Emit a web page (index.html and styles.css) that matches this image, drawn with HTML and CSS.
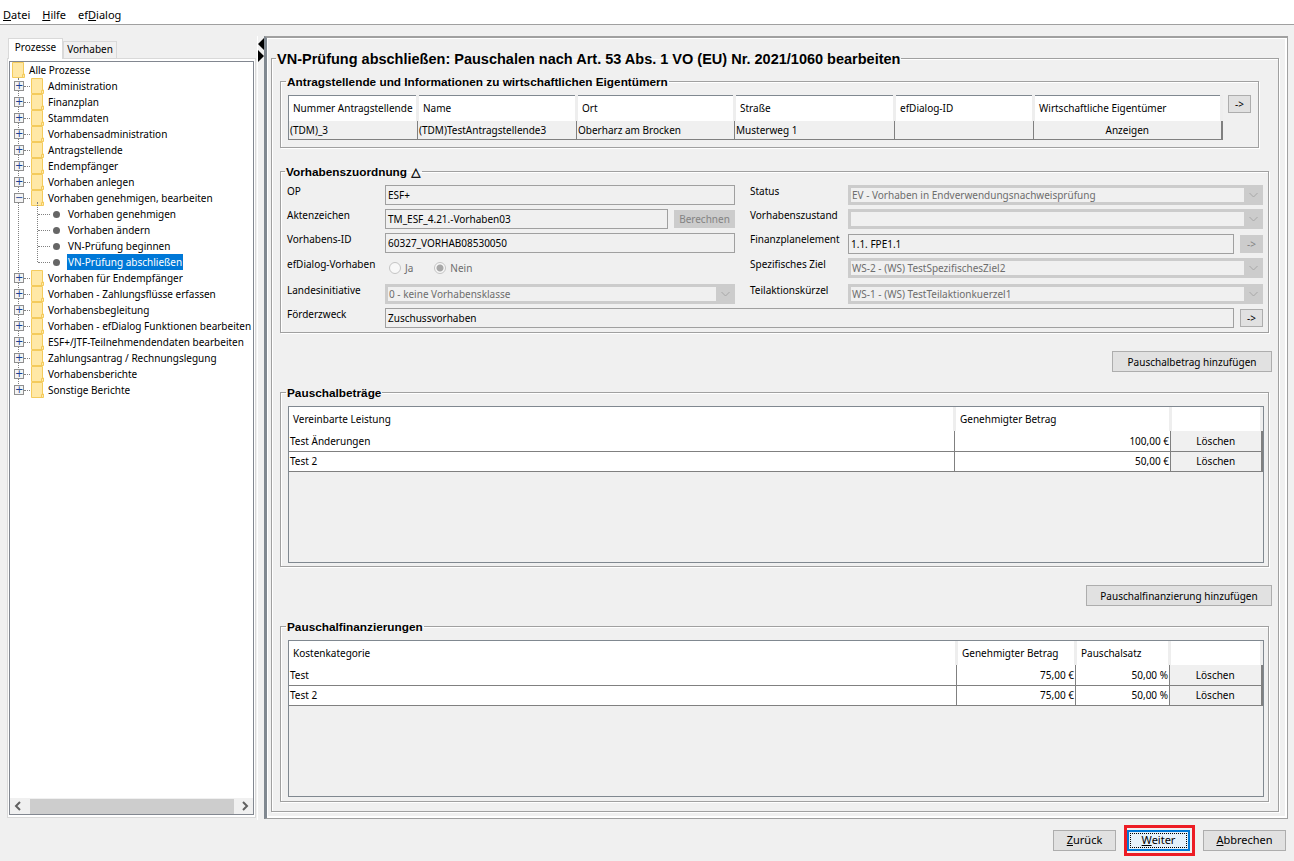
FILE: index.html
```html
<!DOCTYPE html>
<html lang="de">
<head>
    <meta charset="UTF-8">
    <title>efDialog</title>
    <link rel="stylesheet" href="styles.css">
</head>
<body>
    <svg class="defs" width="0" height="0">
        <symbol id="folder" viewBox="0 0 13 16">
            <path d="M.5.5h11v11.500h1v3.500H.5z" fill="#ffe8a6" stroke="#f4cb5c"/>
            <path d="M10.500 15.500v-3h2" fill="none" stroke="#f4cb5c"/>
        </symbol>
    </svg>

    <nav class="menubar">
        <span><u>D</u>atei</span>
        <span><u>H</u>ilfe</span>
        <span>ef<u>D</u>ialog</span>
    </nav>

    <main class="workspace">
        <aside class="side">
            <div class="tabs">
                <div class="tab active">Prozesse</div>
                <div class="tab">Vorhaben</div>
            </div>
            <div class="tab-panel">
                <div class="tree">
                    <div class="tree-scroll">
                        <div class="node root"><svg class="folder"><use href="#folder"/></svg>Alle Prozesse</div>
                        <ul class="level1">
                            <li class="node"><span class="exp">+</span><svg class="folder"><use href="#folder"/></svg>Administration</li>
                            <li class="node"><span class="exp">+</span><svg class="folder"><use href="#folder"/></svg>Finanzplan</li>
                            <li class="node"><span class="exp">+</span><svg class="folder"><use href="#folder"/></svg>Stammdaten</li>
                            <li class="node"><span class="exp">+</span><svg class="folder"><use href="#folder"/></svg>Vorhabensadministration</li>
                            <li class="node"><span class="exp">+</span><svg class="folder"><use href="#folder"/></svg>Antragstellende</li>
                            <li class="node"><span class="exp">+</span><svg class="folder"><use href="#folder"/></svg>Endempfänger</li>
                            <li class="node"><span class="exp">+</span><svg class="folder"><use href="#folder"/></svg>Vorhaben anlegen</li>
                            <li class="node"><span class="exp">−</span><svg class="folder"><use href="#folder"/></svg>Vorhaben genehmigen, bearbeiten</li>
                            <li>
                                <ul class="level2">
                                    <li class="leaf"><i class="dot"></i>Vorhaben genehmigen</li>
                                    <li class="leaf"><i class="dot"></i>Vorhaben ändern</li>
                                    <li class="leaf"><i class="dot"></i>VN-Prüfung beginnen</li>
                                    <li class="leaf"><i class="dot"></i><span class="selected">VN-Prüfung abschließen</span></li>
                                </ul>
                            </li>
                            <li class="node"><span class="exp">+</span><svg class="folder"><use href="#folder"/></svg>Vorhaben für Endempfänger</li>
                            <li class="node"><span class="exp">+</span><svg class="folder"><use href="#folder"/></svg>Vorhaben - Zahlungsflüsse erfassen</li>
                            <li class="node"><span class="exp">+</span><svg class="folder"><use href="#folder"/></svg>Vorhabensbegleitung</li>
                            <li class="node"><span class="exp">+</span><svg class="folder"><use href="#folder"/></svg>Vorhaben - efDialog Funktionen bearbeiten</li>
                            <li class="node"><span class="exp">+</span><svg class="folder"><use href="#folder"/></svg>ESF+/JTF-Teilnehmendendaten bearbeiten</li>
                            <li class="node"><span class="exp">+</span><svg class="folder"><use href="#folder"/></svg>Zahlungsantrag / Rechnungslegung</li>
                            <li class="node"><span class="exp">+</span><svg class="folder"><use href="#folder"/></svg>Vorhabensberichte</li>
                            <li class="node"><span class="exp">+</span><svg class="folder"><use href="#folder"/></svg>Sonstige Berichte</li>
                        </ul>
                    </div>
                    <div class="hscroll">
                        <svg width="10" height="10" viewBox="0 0 10 10"><path d="M7 1 3 5l4 4" fill="none" stroke="#606060" stroke-width="2"/></svg>
                        <div class="thumb"></div>
                        <svg width="10" height="10" viewBox="0 0 10 10"><path d="m3 1 4 4-4 4" fill="none" stroke="#606060" stroke-width="2"/></svg>
                    </div>
                </div>
            </div>
        </aside>

        <div class="splitter">
            <svg width="6" height="24" viewBox="0 0 6 24"><path d="M6 0v12L0 6zM0 12l6 6-6 6z" fill="#000"/></svg>
        </div>

        <section class="content">
            <fieldset class="frame page-frame">
                <legend class="page-title">VN-Prüfung abschließen: Pauschalen nach Art. 53 Abs. 1 VO (EU) Nr. 2021/1060 bearbeiten</legend>

                <fieldset class="frame applicant-frame">
                    <legend>Antragstellende und Informationen zu wirtschaftlichen Eigentümern</legend>
                    <div class="applicant-row">
                        <table class="grid applicant-table">
                            <tr>
                                <th>Nummer Antragstellende</th><th>Name</th><th>Ort</th><th>Straße</th><th>efDialog-ID</th><th>Wirtschaftliche Eigentümer</th>
                            </tr>
                            <tr class="muted">
                                <td>(TDM)_3</td><td>(TDM)TestAntragstellende3</td><td>Oberharz am Brocken</td><td>Musterweg 1</td><td></td><td class="action">Anzeigen</td>
                            </tr>
                        </table>
                        <button class="btn arrow">-&gt;</button>
                    </div>
                </fieldset>

                <fieldset class="frame assign-frame">
                    <legend>Vorhabenszuordnung <span class="delta">△</span></legend>
                    <div class="form">
                        <label>OP</label>
                        <div class="input">ESF+</div>
                        <label>Status</label>
                        <div class="combo"><span>EV - Vorhaben in Endverwendungsnachweisprüfung</span><svg class="chev" viewBox="0 0 10 6"><path d="m1 1 4 4 4-4" fill="none" stroke="#a8a8a8"/></svg></div>

                        <label>Aktenzeichen</label>
                        <div class="with-btn">
                            <div class="input">TM_ESF_4.21.-Vorhaben03</div>
                            <button class="btn disabled calc">Berechnen</button>
                        </div>
                        <label>Vorhabenszustand</label>
                        <div class="combo"><span></span><svg class="chev" viewBox="0 0 10 6"><path d="m1 1 4 4 4-4" fill="none" stroke="#a8a8a8"/></svg></div>

                        <label>Vorhabens-ID</label>
                        <div class="input">60327_VORHAB08530050</div>
                        <label>Finanzplanelement</label>
                        <div class="with-btn">
                            <div class="input">1.1. FPE1.1</div>
                            <button class="btn disabled arrow">-&gt;</button>
                        </div>

                        <label>efDialog-Vorhaben</label>
                        <div class="radios">
                            <span class="radio"><i class="circle"></i>Ja</span>
                            <span class="radio"><i class="circle checked"></i>Nein</span>
                        </div>
                        <label>Spezifisches Ziel</label>
                        <div class="combo"><span>WS-2 - (WS) TestSpezifischesZiel2</span><svg class="chev" viewBox="0 0 10 6"><path d="m1 1 4 4 4-4" fill="none" stroke="#a8a8a8"/></svg></div>

                        <label>Landesinitiative</label>
                        <div class="combo"><span>0 - keine Vorhabensklasse</span><svg class="chev" viewBox="0 0 10 6"><path d="m1 1 4 4 4-4" fill="none" stroke="#a8a8a8"/></svg></div>
                        <label>Teilaktionskürzel</label>
                        <div class="combo"><span>WS-1 - (WS) TestTeilaktionkuerzel1</span><svg class="chev" viewBox="0 0 10 6"><path d="m1 1 4 4 4-4" fill="none" stroke="#a8a8a8"/></svg></div>

                        <label>Förderzweck</label>
                        <div class="with-btn wide">
                            <div class="input">Zuschussvorhaben</div>
                            <button class="btn arrow">-&gt;</button>
                        </div>
                    </div>
                </fieldset>

                <div class="add-row first"><button class="btn add">Pauschalbetrag hinzufügen</button></div>

                <fieldset class="frame list-frame flat">
                    <legend>Pauschalbeträge</legend>
                    <div class="grid-wrap">
                        <table class="grid flat-table">
                            <tr><th>Vereinbarte Leistung</th><th>Genehmigter Betrag</th><th></th></tr>
                            <tr><td>Test Änderungen</td><td class="num">100,00 €</td><td class="action">Löschen</td></tr>
                            <tr><td>Test 2</td><td class="num">50,00 €</td><td class="action">Löschen</td></tr>
                        </table>
                    </div>
                </fieldset>

                <div class="add-row second"><button class="btn add">Pauschalfinanzierung hinzufügen</button></div>

                <fieldset class="frame list-frame fin">
                    <legend>Pauschalfinanzierungen</legend>
                    <div class="grid-wrap">
                        <table class="grid fin-table">
                            <tr><th>Kostenkategorie</th><th>Genehmigter Betrag</th><th>Pauschalsatz</th><th></th></tr>
                            <tr><td>Test</td><td class="num">75,00 €</td><td class="num">50,00 %</td><td class="action">Löschen</td></tr>
                            <tr><td>Test 2</td><td class="num">75,00 €</td><td class="num">50,00 %</td><td class="action">Löschen</td></tr>
                        </table>
                    </div>
                </fieldset>
            </fieldset>
        </section>
    </main>

    <footer class="footer">
        <button class="btn nav back"><u>Z</u>urück</button>
        <div class="highlight"><button class="btn nav next"><span><u>W</u>eiter</span></button></div>
        <button class="btn nav cancel"><u>A</u>bbrechen</button>
    </footer>
</body>
</html>
```

FILE: styles.css
```css
* {
    box-sizing: border-box;
}
html, body {
    height: 100%;
}
body {
    margin: 0;
    display: flex;
    flex-direction: column;
    overflow: hidden;
    background-color: #f0f0f0;
    color: #000;
    font-family: "Noto Sans", sans-serif;
    font-size: 10px;
    line-height: 16px;
}
.defs {
    position: absolute;
}
ul {
    list-style: none;
    margin: 0;
    padding: 0;
}
button {
    font: inherit;
    color: inherit;
}

/* menu */
.menubar {
    height: 25px;
    flex: none;
    display: flex;
    align-items: center;
    gap: 12px;
    padding: 6px 0 0 3px;
    background-color: #fff;
    border-bottom: 1px solid #a0a0a0;
    font-size: 11px;
}

/* main area */
.workspace {
    height: 795px;
    flex: none;
    display: flex;
    padding: 11px 0 0 7px;
}
.side {
    width: 249px;
    flex: none;
    display: flex;
    flex-direction: column;
    padding-top: 2px;
}
.tabs {
    display: flex;
    align-items: flex-end;
    height: 21px;
    margin-bottom: -1px;
    margin-left: 1px;
    position: relative;
}
.tab {
    height: 18px;
    width: 54px;
    text-align: center;
    line-height: 15px;
    border: 1px solid #d9d9d9;
    border-bottom: none;
}
.tab.active {
    height: 21px;
    width: 55px;
    line-height: 17px;
    background-color: #fff;
}
.tab-panel {
    height: 760px;
    padding: 2px 1px;
    background-color: #fff;
    border: 1px solid #d9d9d9;
}
.tree {
    height: 100%;
    display: flex;
    flex-direction: column;
    background-color: #fff;
    border: 1px solid #828790;
}
.tree-scroll {
    flex: 1;
    overflow: hidden;
}
.node, .leaf {
    height: 16px;
    display: flex;
    align-items: center;
    white-space: nowrap;
}
.root .folder {
    margin-left: 2px;
}
.folder {
    width: 13px;
    height: 16px;
    flex: none;
    margin-right: 4px;
}
.level1 {
    position: relative;
}
.level1::before {
    content: "";
    position: absolute;
    left: 8px;
    top: 0;
    bottom: 8px;
    border-left: 1px dotted #808080;
}
.level1 > .node {
    position: relative;
    padding-left: 21px;
}
.level1 > .node::before {
    content: "";
    position: absolute;
    left: 14px;
    top: 8px;
    width: 6px;
    border-top: 1px dotted #808080;
}
.exp {
    position: absolute;
    left: 4px;
    top: 3px;
    width: 10px;
    height: 10px;
    background-color: #f4f4f4;
    border: 1px solid #8f8f8f;
    color: #1c3f94;
    font: 10px/8px "DejaVu Sans", sans-serif;
    text-align: center;
}
.level2 {
    position: relative;
    padding-left: 43px;
}
.level2::before {
    content: "";
    position: absolute;
    left: 27px;
    top: -4px;
    bottom: 8px;
    border-left: 1px dotted #808080;
}
.leaf {
    position: relative;
}
.leaf::before {
    content: "";
    position: absolute;
    left: -15px;
    top: 8px;
    width: 12px;
    border-top: 1px dotted #808080;
}
.dot {
    width: 7px;
    height: 7px;
    flex: none;
    margin-right: 8px;
    background-color: #666;
    border-radius: 50%;
}
.selected {
    margin-left: -1px;
    padding: 0 1px;
    background-color: #0078d7;
    color: #fff;
}
.hscroll {
    height: 16px;
    flex: none;
    display: flex;
    align-items: center;
    justify-content: space-between;
    padding: 0 3px;
    background-color: #f0f0f0;
}
.hscroll svg {
    flex: none;
}
.thumb {
    width: 204px;
    height: 15px;
    background-color: #cdcdcd;
}
.splitter {
    width: 7px;
    flex: none;
    padding: 2px 0 0 0;
    border-left: 1px solid #fff;
    margin-left: 1px;
}
.content {
    width: 1024px;
    height: 783px;
    flex: none;
    padding: 10px 8px 0 4px;
    border-top: 2px solid #a0a0a0;
    border-left: 3px solid #808890;
    border-right: 1px solid #a0a0a0;
    border-bottom: 1px solid #a0a0a0;
    box-shadow: inset 1px 1px 0 #fff, inset -2px -2px 0 #fff;
}

/* framed groups */
.frame {
    margin: 0;
    min-width: 0;
    border: 1px solid #a0a0a0;
    box-shadow: 1px 1px 0 #fff, inset 1px 1px 0 #fff;
}
legend {
    padding: 2px 1px 0;
    margin-left: -2px;
    font-family: "Liberation Sans", sans-serif;
    font-weight: bold;
    font-size: 11.8px;
    line-height: 14px;
}
.page-frame {
    height: 764px;
    padding: 5px 9px 0 8px;
}
.page-title {
    margin-left: -4px;
    font-size: 14.500px;
    line-height: 18px;
}
.applicant-frame {
    width: 979px;
    height: 75px;
    padding: 6px 0 0 7px;
}
.applicant-row {
    display: flex;
    align-items: flex-start;
    gap: 5px;
}
.assign-frame {
    height: 170px;
    margin-top: 15px;
    padding: 6px 5px 0 6px;
}
.delta {
    margin-left: 1px;
    font-family: "DejaVu Sans", sans-serif;
    font-size: 12px;
    -webkit-text-stroke: .4px #000;
}
.form {
    display: grid;
    grid-template-columns: 98px 350px 113px 415px;
    grid-template-rows: 20px 20px 21px 22px 20px 20px;
    row-gap: 4px;
}
.form label {
    line-height: 12px;
}
.form label:nth-of-type(even) {
    padding-left: 15px;
}
.input {
    height: 20px;
    flex: 1;
    min-width: 0;
    padding-left: 2px;
    line-height: 19px;
    background-color: #f0f0f0;
    border: 1px solid #a0a0a0;
}
.combo {
    height: 20px;
    display: flex;
    align-items: center;
    padding: 3px 0 3px 3px;
    background-color: #ccc;
    color: #6d6d6d;
}
.combo span {
    flex: 1;
    height: 14px;
    line-height: 14px;
    padding-left: 1px;
    background-color: #f0f0f0;
}
.chev {
    width: 11px;
    height: 6px;
    margin: 0 4px;
    flex: none;
}
.with-btn {
    display: flex;
    align-items: center;
    gap: 6px;
}
.with-btn.wide {
    grid-column: 2 / 5;
}
.radios {
    height: 20px;
    display: flex;
    align-items: center;
    gap: 21px;
    padding-left: 4px;
    color: #6d6d6d;
}
.radio {
    display: flex;
    align-items: center;
    gap: 4px;
}
.circle {
    width: 12px;
    height: 12px;
    border: 1px solid #c4c4c4;
    border-radius: 50%;
    background-color: #f8f8f8;
}
.circle.checked {
    background: radial-gradient(circle, #a8a8a8 0 3px, #f8f8f8 4px);
}

/* buttons */
.btn {
    padding: 0;
    background-color: #e1e1e1;
    border: 1px solid #adadad;
    text-align: center;
    line-height: 16px;
}
.btn.disabled {
    background-color: #ccc;
    border-color: #ccc;
    color: #838383;
}
.arrow {
    width: 23px;
    height: 18px;
    flex: none;
    line-height: 14px;
}
.calc {
    width: 61px;
    height: 18px;
    flex: none;
}
.add {
    height: 21px;
}
.add-row {
    display: flex;
    justify-content: flex-end;
    margin-right: -3px;
}
.add-row.first {
    margin-top: 18px;
}
.add-row.first .add {
    width: 160px;
}
.add-row.second {
    margin-top: 18px;
}
.add-row.second .add {
    width: 186px;
}
.list-frame {
    height: 183px;
    padding: 6px 4px 0 7px;
}
.list-frame.flat {
    margin-top: 12px;
}
.list-frame.fin {
    margin-top: 12px;
    height: 184px;
}

/* tables */
.grid-wrap {
    height: 157px;
    border: 1px solid #808890;
}
.grid {
    width: 100%;
    table-layout: fixed;
    border-collapse: collapse;
}
.grid th {
    height: 24px;
    padding: 0 0 0 4px;
    text-align: left;
    font-weight: normal;
    background-color: #fff;
    border-right: 3px solid #eee;
}
.grid td {
    height: 20px;
    padding: 0 1px;
    background-color: #fff;
    white-space: nowrap;
    overflow: hidden;
    border-right: 1px solid #808080;
    border-bottom: 1px solid #808080;
}
.grid td:last-child {
    border-right: 2px solid #808080;
}
.grid td.num {
    text-align: right;
}
.grid td.action {
    padding: 0;
    background-color: #f0f0f0;
    text-align: center;
}
.applicant-table {
    width: 935px;
    flex: none;
    border: 1px solid #808890;
    border-right-width: 2px;
}
.applicant-table th {
    height: 25px;
}
.applicant-table td {
    height: 19px;
}
.applicant-table .muted td {
    background-color: #f0f0f0;
}
.applicant-table th:nth-child(1) { width: 129px; }
.applicant-table th:nth-child(2) { width: 159px; }
.applicant-table th:nth-child(3) { width: 158px; }
.applicant-table th:nth-child(4) { width: 160px; }
.applicant-table th:nth-child(5) { width: 139px; }
.flat-table th:nth-child(2) { width: 216px; }
.flat-table th:nth-child(3) { width: 91px; }
.fin-table th:nth-child(2) { width: 119px; }
.fin-table th:nth-child(3) { width: 94px; }
.fin-table th:nth-child(4) { width: 92px; }

/* footer */
.footer {
    flex: 1;
    display: flex;
    align-items: flex-start;
    justify-content: flex-end;
    gap: 8px;
    padding: 5px 8px 0 0;
}
.nav {
    height: 21px;
    margin-top: 5px;
    padding-bottom: 2px;
    font-size: 11px;
}
.back {
    width: 63px;
}
.cancel {
    width: 83px;
}
.highlight {
    width: 71px;
    height: 31px;
    padding: 2px 2px 2px 0;
    border: 3px solid #ed1c24;
    display: flex;
    justify-content: center;
}
.next {
    width: 63px;
    height: 21px;
    margin: 0;
    padding: 1px;
    border: 2px solid #0078d7;
    background-color: #e5f1fb;
}
.next span {
    display: block;
    height: 15px;
    line-height: 12px;
    border: 1px dotted #000;
}
```
